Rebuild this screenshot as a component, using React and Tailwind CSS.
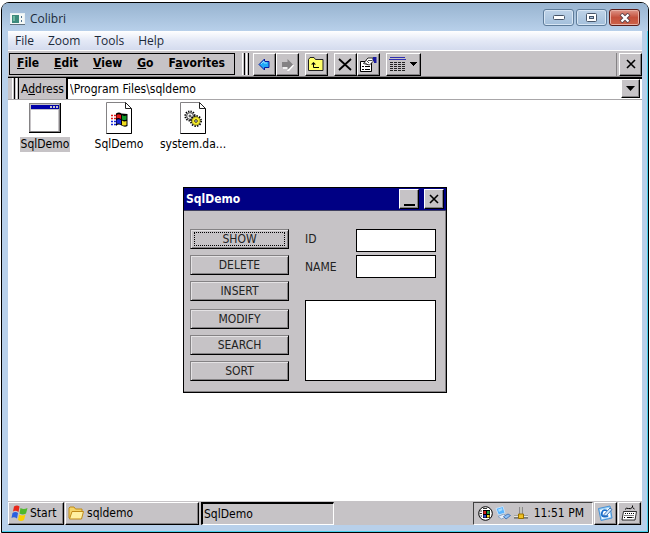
import React, { useState } from 'react';
import clsx from 'clsx';

const RAISED = 'bg-[#c6c3c6] border border-t-white border-l-white border-r-black border-b-black shadow-[inset_-1px_-1px_0_#848284]';
const TAHOMA = "font-['DejaVu_Sans_Condensed','DejaVu_Sans',sans-serif]";
const SEGOE = "font-['Open_Sans','Noto_Sans',sans-serif]";

function Grip() {
  return (
    <div className="flex shrink-0 gap-px self-stretch">
      <div className="w-[3px] border-r border-l border-r-black border-l-white bg-[#c6c3c6]" />
      <div className="w-[3px] border-r border-l border-r-black border-l-white bg-[#c6c3c6]" />
    </div>
  );
}

function ToolButton({ label, wide, children }) {
  return (
    <button aria-label={label} className={clsx('flex h-[23px] shrink-0 items-center justify-center', wide ? 'w-[35px]' : 'w-[23px]', RAISED)}>
      {children}
    </button>
  );
}

function CrossIcon() {
  return (
    <svg width="10" height="10" viewBox="0 0 10 10" stroke="#000" strokeWidth="1.6" fill="none">
      <path d="M1 1l8 8M9 1l-8 8" />
    </svg>
  );
}

function FlagPanes() {
  return (
    <g stroke="none">
      <path d="M5 1.500q3-2 5.500 0L9.500 7q-3-2-5.500-.5z" fill="#e8281b" />
      <path d="M11.500 3q3 2 7 0l-1.500 5.500q-3 2-6.500 0z" fill="#4fb82a" />
      <path d="M3.500 8q3-2 5.500 0l-1 5.500q-3-2-5.500-.5z" fill="#2a60e0" />
      <path d="M10 9.500q3 2 6.500 0L15 15q-3 2-6 0z" fill="#fbd000" />
    </g>
  );
}

function AppIcon() {
  return (
    <svg width="32" height="30" viewBox="0 0 32 30" shapeRendering="crispEdges">
      <rect width="32" height="30" fill="#000" />
      <rect width="31" height="29" fill="#848284" />
      <rect x="1" y="1" width="29" height="27" fill="#c6c3c6" />
      <rect x="2" y="2" width="28" height="4" fill="#0000a8" />
      <path d="M21 3h2v2h-2zM24 3h2v2h-2zM27 3h2v2h-2z" fill="#c6c3c6" />
      <rect x="2" y="7" width="27" height="21" fill="#fff" />
    </svg>
  );
}

function Page({ children }) {
  return (
    <svg width="26" height="32" viewBox="0 0 26 32">
      <path d="M.5.5h19l6 6v25H.5z" fill="#fff" stroke="#848284" />
      <path d="M25.500 6.500v25H.5" fill="none" stroke="#000" />
      <path d="M19.500.5v6h6z" fill="#fff" stroke="#222" />
      {children}
    </svg>
  );
}

function FlagFileIcon() {
  return (
    <Page>
      <path d="M10 11.500q3-2 5.500 0l6 .5v12q-3 1.500-6-.5t-5.500.5z" fill="#000" />
      <path d="M10.500 13q2-1.500 4.500 0v4q-2.500-1.500-4.500-.5z" fill="#e01818" />
      <path d="M16 13q2 1.500 4.500.5v4q-2.500 1-4.500 0z" fill="#109828" />
      <path d="M10.500 18q2-1.500 4.500 0v4.500q-2.500-1.500-4.500-.5z" fill="#1828d8" />
      <path d="M16 18.500q2 1.500 4.500.5v4q-2.500 1-4.500 0z" fill="#f0dc20" />
      <path d="M5 13.500h5M5 16.500h5" stroke="#e01818" strokeDasharray="2 1" strokeWidth="1.500" />
      <path d="M5 19.500h5M5 22.500h5" stroke="#1828d8" strokeDasharray="2 1" strokeWidth="1.500" />
    </Page>
  );
}

function GearFileIcon() {
  return (
    <Page>
      <circle cx="10" cy="14" r="4.600" fill="none" stroke="#000" strokeWidth="2" strokeDasharray="1.300 1.100" />
      <circle cx="10" cy="14" r="3.300" fill="#fff" stroke="#222" strokeWidth=".8" />
      <circle cx="10" cy="14" r="1" fill="#fff" stroke="#000" strokeWidth=".8" />
      <circle cx="16" cy="19" r="5" fill="none" stroke="#000" strokeWidth="2" strokeDasharray="1.400 1.200" />
      <circle cx="16" cy="19" r="4.200" fill="#f4ea28" stroke="#6a6410" strokeWidth=".8" />
      <circle cx="16" cy="19" r="1.300" fill="#fff" stroke="#000" strokeWidth=".8" />
    </Page>
  );
}

const FILES = [
  { name: 'SqlDemo', Icon: AppIcon },
  { name: 'SqlDemo', Icon: FlagFileIcon },
  { name: 'system.da...', Icon: GearFileIcon },
];

const BUTTON_GROUPS = [
  ['SHOW', 'DELETE', 'INSERT'],
  ['MODIFY', 'SEARCH', 'SORT'],
];

function TitleBar() {
  const frame = 'flex h-[17px] w-[31px] items-center justify-center rounded-[3px] border shadow-[inset_0_0_0_1px_#d8e6f4]';
  return (
    <header className="flex h-7 items-center justify-between rounded-t-md bg-linear-to-b from-[#98b4d0] to-[#b8d0ea] pr-[8px] pb-px pl-[8px]">
      <div className="flex items-center gap-[5px] pt-1">
        <svg width="15" height="12" viewBox="0 0 15 12">
          <rect x=".5" y=".5" width="14" height="11" fill="#f4f8f6" stroke="#e8f0f4" />
          <rect x="2" y="2" width="7" height="8" fill="#3d8a7c" />
          <path d="M3 3h2v5H3z" fill="#6db8a0" />
          <path d="M11 3h1v2h-1zM11 7h1v2h-1z" fill="#507090" />
          <path d="M0 11.500h15" stroke="#60707c" />
        </svg>
        <span className={`text-[12px] text-[#1c2a3a] ${SEGOE}`}>Colibri</span>
      </div>
      <div className="flex gap-[2px] pt-[2px]">
        <button aria-label="Minimize" className={`${frame} border-[#5e7c9a] bg-linear-to-b from-[#bfd3e8] to-[#a3bfdb]`}>
          <svg width="12" height="5"><rect x=".5" y=".5" width="11" height="4" rx="1" fill="#fff" stroke="#465468" /></svg>
        </button>
        <button aria-label="Maximize" className={`${frame} border-[#5e7c9a] bg-linear-to-b from-[#bfd3e8] to-[#a3bfdb]`}>
          <svg width="11" height="9" fill="none"><rect x=".5" y=".5" width="10" height="8" rx="1" fill="#fff" stroke="#465468" /><rect x="3.500" y="3.500" width="4" height="2" fill="#a9c3de" stroke="#465468" /></svg>
        </button>
        <button aria-label="Close" className="flex h-[17px] w-[31px] items-center justify-center rounded-[3px] border border-[#5a1c18] bg-linear-to-b from-[#dc9488] via-[#c4503c] to-[#cc6248] shadow-[inset_0_0_0_1px_#e8b0a4]">
          <svg width="12" height="10" viewBox="0 0 12 10"><path d="M2 1l8 8M10 1l-8 8" stroke="#5a4048" strokeWidth="4" /><path d="M2.500 1.500l7 7M9.500 1.500l-7 7" stroke="#fff" strokeWidth="2.400" /></svg>
        </button>
      </div>
    </header>
  );
}

function Toolbar() {
  return (
    <div className="flex h-7 items-center border-t border-b border-t-white border-b-black bg-[#c6c3c6] shadow-[inset_0_-1px_0_#848284]">
      <nav className={`ml-px flex h-[22px] items-center gap-[15px] border border-black pr-[9px] pb-[3px] pl-[7px] text-[12px] font-bold ${TAHOMA}`}>
        <button><u>F</u>ile</button>
        <button><u>E</u>dit</button>
        <button><u>V</u>iew</button>
        <button><u>G</u>o</button>
        <button>F<u>a</u>vorites</button>
      </nav>
      <div className="ml-[7px] flex h-[22px]"><Grip /></div>
      <div className="ml-1 flex">
        <ToolButton label="Back">
          <svg width="13" height="13" viewBox="0 0 13 13"><path d="M1 6.500L6.500 1v2.500h4.500v6H6.500V12z" fill="#20a8f8" stroke="#0818a0" strokeLinejoin="round" /><path d="M3 6l3-3v2h3" stroke="#90e0ff" fill="none" /></svg>
        </ToolButton>
        <ToolButton label="Forward">
          <svg width="13" height="13" viewBox="0 0 13 13"><path d="M12.500 7L7 13v-3H2" fill="none" stroke="#fff" strokeWidth="1.500" /><path d="M12 6.500L6.500 1v3H1v5h5.500v3z" fill="#848284" /></svg>
        </ToolButton>
      </div>
      <div className="ml-[6px] flex">
        <ToolButton label="Up">
          <svg width="16" height="14" viewBox="0 0 16 14"><path d="M.5 13.500V2.500l1.500-2h4l1.500 2h7.500v11z" fill="#ffff6b" stroke="#222" /><path d="M5.500 6v4.500H11" fill="none" stroke="#000" /><path d="M3 7.500L5.500 5 8 7.500z" /></svg>
        </ToolButton>
      </div>
      <div className="ml-[6px] flex">
        <ToolButton label="Delete">
          <svg width="14" height="13" viewBox="0 0 14 13"><path d="M1 1l12 11M13 1L1 12" stroke="#000" strokeWidth="1.800" /></svg>
        </ToolButton>
        <ToolButton label="Properties">
          <svg width="17" height="15" viewBox="0 0 17 15">
            <path d="M.5 4.500h11v10H.5z" fill="#fff" stroke="#000" />
            <path d="M2 9.500h2M5 9.500h5M2 12.500h2M5 12.500h5" stroke="#000" />
            <path d="M3.500 6.500L7 2l1-1h5v3.500L9.500 8z" fill="#fff" stroke="#000" strokeWidth=".8" />
            <path d="M5 5.500l2 2M6.500 3.500l2.500 2.500M8 3.500h4" stroke="#000" strokeWidth=".7" />
            <path d="M13 0h3.500v6H14V4h-1z" fill="#1818a0" />
          </svg>
        </ToolButton>
      </div>
      <div className="ml-[6px] flex">
        <ToolButton label="View" wide>
          <svg width="28" height="14" viewBox="0 0 28 14" shapeRendering="crispEdges">
            <path d="M1 0h15v1H1zM0 2h17v1H0z" fill="#3030b0" />
            <path d="M1 5.500h15M1 7.500h15M1 9.500h15M1 11.500h15M1 13.500h15" stroke="#222" strokeDasharray="3 1" />
            <path d="M21 5h7l-3.500 4z" />
          </svg>
        </ToolButton>
      </div>
      <div className="ml-auto flex border-l border-[#848284] pl-[2px]">
        <ToolButton label="Close folder"><CrossIcon /></ToolButton>
      </div>
    </div>
  );
}

function AddressBar() {
  const [path, setPath] = useState('\\Program Files\\sqldemo');
  return (
    <div className={`flex h-[22px] items-center border-b border-[#a8a6a8] bg-[#c6c3c6] pl-1 text-[12px] ${TAHOMA}`}>
      <Grip />
      <label htmlFor="address" className="ml-[2px] w-[45px] shrink-0">A<u>d</u>dress</label>
      <div className="flex h-[21px] min-w-0 flex-1 border-t border-l-2 border-black bg-white">
        <input id="address" value={path} onChange={e => setPath(e.target.value)} className="min-w-0 flex-1 bg-white pl-[2px] outline-none" />
        <button aria-label="Show addresses" className={`mr-[2px] flex h-[19px] w-[19px] items-center justify-center ${RAISED}`}>
          <svg width="9" height="5"><path d="M0 0h9L4.500 5z" /></svg>
        </button>
      </div>
    </div>
  );
}

function SqlDemoDialog() {
  const [form, setForm] = useState({ id: '', name: '' });
  const set = (k, v) => setForm(f => ({ ...f, [k]: v }));
  const field = 'h-[23px] w-20 border border-black bg-white px-1 outline-none';

  return (
    <section className={`absolute top-[87px] left-[175px] w-[264px] border border-black bg-[#c6c3c6] text-[12px] text-[#222] shadow-[inset_-1px_-1px_0_#848284] ${TAHOMA}`}>
      <div className="flex h-[23px] items-center border-b border-[#404060] bg-[#000084] pr-[2px] pl-[2px]">
        <h1 className="flex-1 font-bold text-white">SqlDemo</h1>
        <button aria-label="Minimize dialog" className={`mr-[5px] flex h-5 w-5 items-end justify-center pb-[2px] ${RAISED}`}>
          <svg width="11" height="2"><rect width="11" height="2" /></svg>
        </button>
        <button aria-label="Close dialog" className={`flex h-5 w-5 items-center justify-center ${RAISED}`}><CrossIcon /></button>
      </div>
      <div className="flex gap-4 pt-[18px] pr-[10px] pb-[11px] pl-[6px]">
        <div className="flex w-[99px] flex-col gap-2">
          {BUTTON_GROUPS.map(group => (
            <div key={group[0]} className="flex flex-col gap-[6px]">
              {group.map(name => (
                <button
                  key={name}
                  className="h-5 border border-t-[#848284] border-r-black border-b-black border-l-[#848284] bg-[#c6c3c6] p-[2px] leading-[14px] shadow-[inset_1px_1px_0_#e4e2e4,inset_-1px_-1px_0_#848284]"
                >
                  <span className={clsx('block h-[14px]', name === 'SHOW' && 'mx-px outline-1 -outline-offset-1 outline-black outline-dotted')}>{name}</span>
                </button>
              ))}
            </div>
          ))}
        </div>
        <div className="flex flex-1 flex-col">
          <div className="flex flex-col gap-[3px]">
            <div className="flex items-center justify-between">
              <label htmlFor="row-id" className="pb-1">ID</label>
              <input id="row-id" className={field} value={form.id} onChange={e => set('id', e.target.value)} />
            </div>
            <div className="flex items-center justify-between">
              <label htmlFor="row-name">NAME</label>
              <input id="row-name" className={field} value={form.name} onChange={e => set('name', e.target.value)} />
            </div>
          </div>
          <textarea aria-label="Results" readOnly className="mt-[22px] h-[81px] resize-none border border-black bg-white outline-none" />
        </div>
      </div>
    </section>
  );
}

function Taskbar() {
  return (
    <footer className={`flex h-6 items-center bg-[#c6c3c6] text-[12px] ${TAHOMA}`}>
      <button className={`flex h-[23px] w-14 items-center gap-[2px] pl-[2px] ${RAISED}`}>
        <svg width="17" height="16" viewBox="2 0 17 16"><FlagPanes /></svg>
        Start
      </button>
      <button className={`ml-px flex h-[23px] w-[134px] items-center gap-[3px] pl-[2px] ${RAISED}`}>
        <svg width="16" height="14" viewBox="0 0 16 14">
          <path d="M1 12V2l1-1h4l1.500 2H14v3" fill="#f4d468" stroke="#c08a18" />
          <path d="M1.500 13L4 5.500h11.500L13.500 13z" fill="#fff0a0" stroke="#c08a18" />
        </svg>
        sqldemo
      </button>
      <button className="ml-[2px] h-[23px] w-[133px] border-t-2 border-r border-b border-l-2 border-t-black border-r-white border-b-white border-l-black bg-[#c6c3c6] pl-px text-left">SqlDemo</button>
      <div className="ml-auto flex h-[23px] items-center gap-[2px] border border-t-[#404040] border-r-white border-b-white border-l-[#404040] pr-2 pl-1">
        <svg width="15" height="15" viewBox="0 0 15 15">
          <circle cx="7.500" cy="7.500" r="6.800" fill="#fff" stroke="#000" />
          <path d="M5 4h7v8H5z" />
          <path d="M5.500 5H8v3H5.500z" fill="#d82020" /><path d="M9 5h2.500v3H9z" fill="#20a040" />
          <path d="M5.500 9H8v2.500H5.500z" fill="#3048d0" /><path d="M9 9h2.500v2.500H9z" fill="#f0d028" />
          <path d="M2 5h2M1.500 7.500h2.500M2.500 10H4M5 2.500h4" fill="none" stroke="#000" strokeWidth=".8" />
        </svg>
        <svg width="16" height="15" viewBox="0 0 16 15">
          <path d="M1 2.500L8 .5 10 7l-6.500 2z" fill="#58b4ff" stroke="#c8e0f8" />
          <path d="M3 3.500l4-1.500.5 2-3.500 2z" fill="#a8dcff" />
          <path d="M3 10.500L9 8l2.500 2.500-5 2.500z" fill="#e8eef8" stroke="#7090b8" strokeWidth=".7" />
          <path d="M8.500 10.500L13 8l2.500 1.500L11 13z" fill="#90c0f4" stroke="#3468b0" strokeWidth=".8" />
        </svg>
        <svg width="16" height="14" viewBox="0 0 16 14">
          <path d="M8 1v8M1 11h14" stroke="#555" strokeWidth="3" />
          <path d="M8 1v8M1 10.500h14" stroke="#e8e8e0" strokeWidth="1.500" />
          <path d="M5.500 8h5v4.500h-5z" fill="#f0c020" stroke="#987000" />
        </svg>
        <time className="pl-[3px]">11:51 PM</time>
      </div>
      <button aria-label="Show desktop" className={`ml-px flex h-[23px] w-[23px] items-center justify-center ${RAISED}`}>
        <svg width="17" height="17" viewBox="0 0 17 17">
          <path d="M1.500 3.500L13 1l2 12L4 15.500z" fill="#9cd4fa" stroke="#4890d4" />
          <path d="M3 5l9-2 1.500 9L5 14z" fill="#fff" />
          <path d="M10 5.500q-4-1.500-5 2t2 4 4-1" fill="none" stroke="#1c70cc" strokeWidth="1.800" />
          <path d="M7 9.500L13 3l2 1.500L9.500 10.500l-2.500.5z" fill="#d8eeff" stroke="#1858a8" strokeWidth=".8" />
        </svg>
      </button>
      <button aria-label="Input panel" className={`mr-px ml-px flex h-[23px] w-[23px] items-center justify-center ${RAISED}`}>
        <svg width="17" height="16" viewBox="0 0 17 16">
          <path d="M4 4.500q1-2 3.500-1t4-1.500V.5M11.500 2.500l2 1.500" fill="none" stroke="#000" />
          <path d="M2.500 6.500h13l-1.500 8.500H1z" fill="#fff" stroke="#000" strokeWidth=".8" />
          <path d="M4 8.500h10M3.500 10.500h10M3 12.500h2M11.500 12.500h2" stroke="#000" strokeDasharray="1 1" />
          <path d="M6 12.500h5" stroke="#000" />
        </svg>
      </button>
    </footer>
  );
}

export default function App() {
  return (
    <div className="flex min-h-screen flex-col bg-white pt-[2px] pr-px pl-px text-black">
      <div className="flex flex-1 flex-col rounded-t-lg border border-black bg-[#b8d0ea] shadow-[inset_-1px_-1px_0_#48d0ec]">
        <TitleBar />
        <div className="mx-[6px] mb-[7px] flex flex-1 flex-col">
          <nav className={`flex h-[19px] items-center gap-[14px] bg-linear-to-b from-white via-[#e4e9f6] to-[#d4dbee] pl-[7px] text-[12px] text-[#1c2a3a] ${SEGOE}`}>
            <button>File</button>
            <button>Zoom</button>
            <button>Tools</button>
            <button>Help</button>
          </nav>
          <Toolbar />
          <AddressBar />
          <main className="relative flex-1 bg-white pt-[2px]">
            <div className="flex">
              {FILES.map(({ name, Icon }, i) => (
                <button key={i} className={`flex w-[74px] flex-col items-center text-[12px] leading-[15px] ${TAHOMA}`}>
                  <span className="flex h-8 items-center"><Icon /></span>
                  <span className={clsx('mt-[3px] px-px', i === 0 && 'bg-[#c6c3c6]')}>{name}</span>
                </button>
              ))}
            </div>
            <SqlDemoDialog />
          </main>
          <Taskbar />
        </div>
      </div>
    </div>
  );
}
